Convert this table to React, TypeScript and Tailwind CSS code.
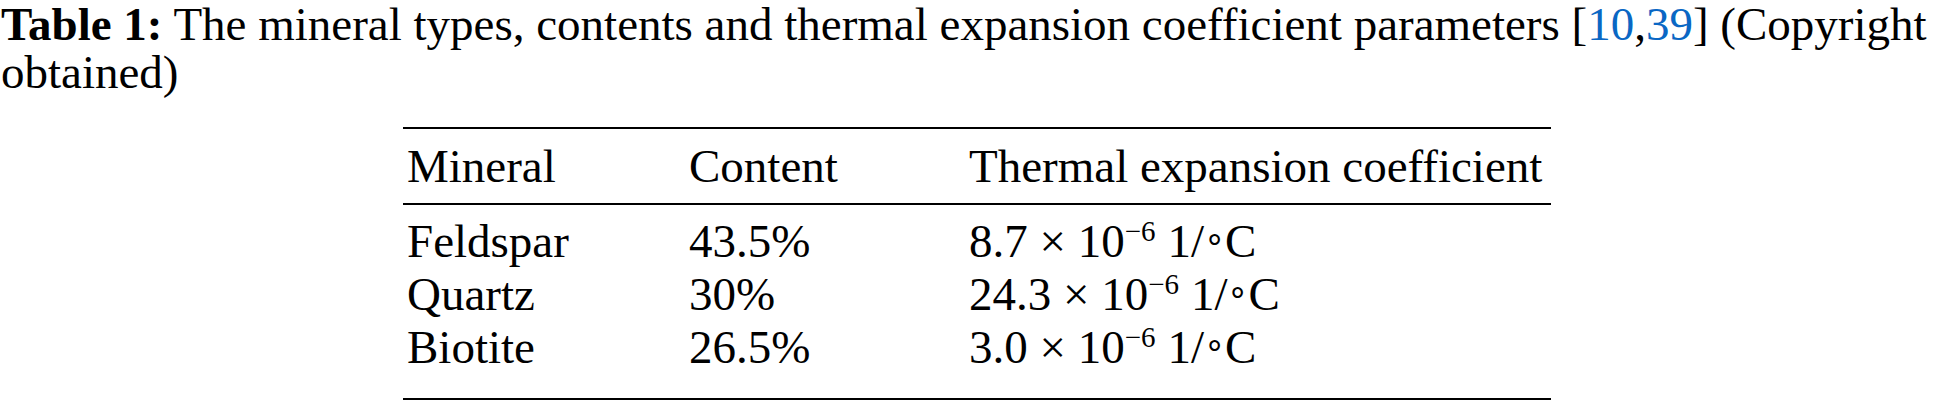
import React from "react";

const rows = [
  { m: "Feldspar", c: "43.5%", v: "8.7" },
  { m: "Quartz", c: "30%", v: "24.3" },
  { m: "Biotite", c: "26.5%", v: "3.0" },
];

function Coef({ v }: { v: string }) {
  return (
    <span className="whitespace-nowrap">
      {v} × 10
      <span className="relative -top-[16px] text-[29px] leading-none">−6</span> 1/
      <span className="relative -top-[7px] text-[34px] leading-none">∘</span>C
    </span>
  );
}

export default function App() {
  return (
    <div
      className="w-[1954px] h-[404px] bg-white text-black overflow-hidden"
      style={{ fontFamily: '"Liberation Serif", "Times New Roman", serif' }}
    >
      <p className="text-[47px] leading-[48px] pl-[1px]">
        <span className="font-bold">Table 1:</span> The mineral types, contents and thermal expansion coefficient
        parameters [<span className="text-[#0a67c4]">10</span>,<span className="text-[#0a67c4]">39</span>] (Copyright
        obtained)
      </p>
      <div className="ml-[403px] mt-[31px] w-[1148px] border-t-2 border-b-2 border-black text-[47px]">
        <div className="flex h-[76px] items-center border-b-2 border-black leading-[53px]">
          <div className="w-[282px] pl-[4px]">Mineral</div>
          <div className="w-[280px] pl-[4px]">Content</div>
          <div className="flex-1 pl-[4px]">Thermal expansion coefficient</div>
        </div>
        <div className="pt-[10px] pb-[24px] leading-[53px]">
          {rows.map((r) => (
            <div key={r.m} className="flex">
              <div className="w-[282px] pl-[4px]">{r.m}</div>
              <div className="w-[280px] pl-[4px]">{r.c}</div>
              <div className="flex-1 pl-[4px]">
                <Coef v={r.v} />
              </div>
            </div>
          ))}
        </div>
      </div>
    </div>
  );
}
